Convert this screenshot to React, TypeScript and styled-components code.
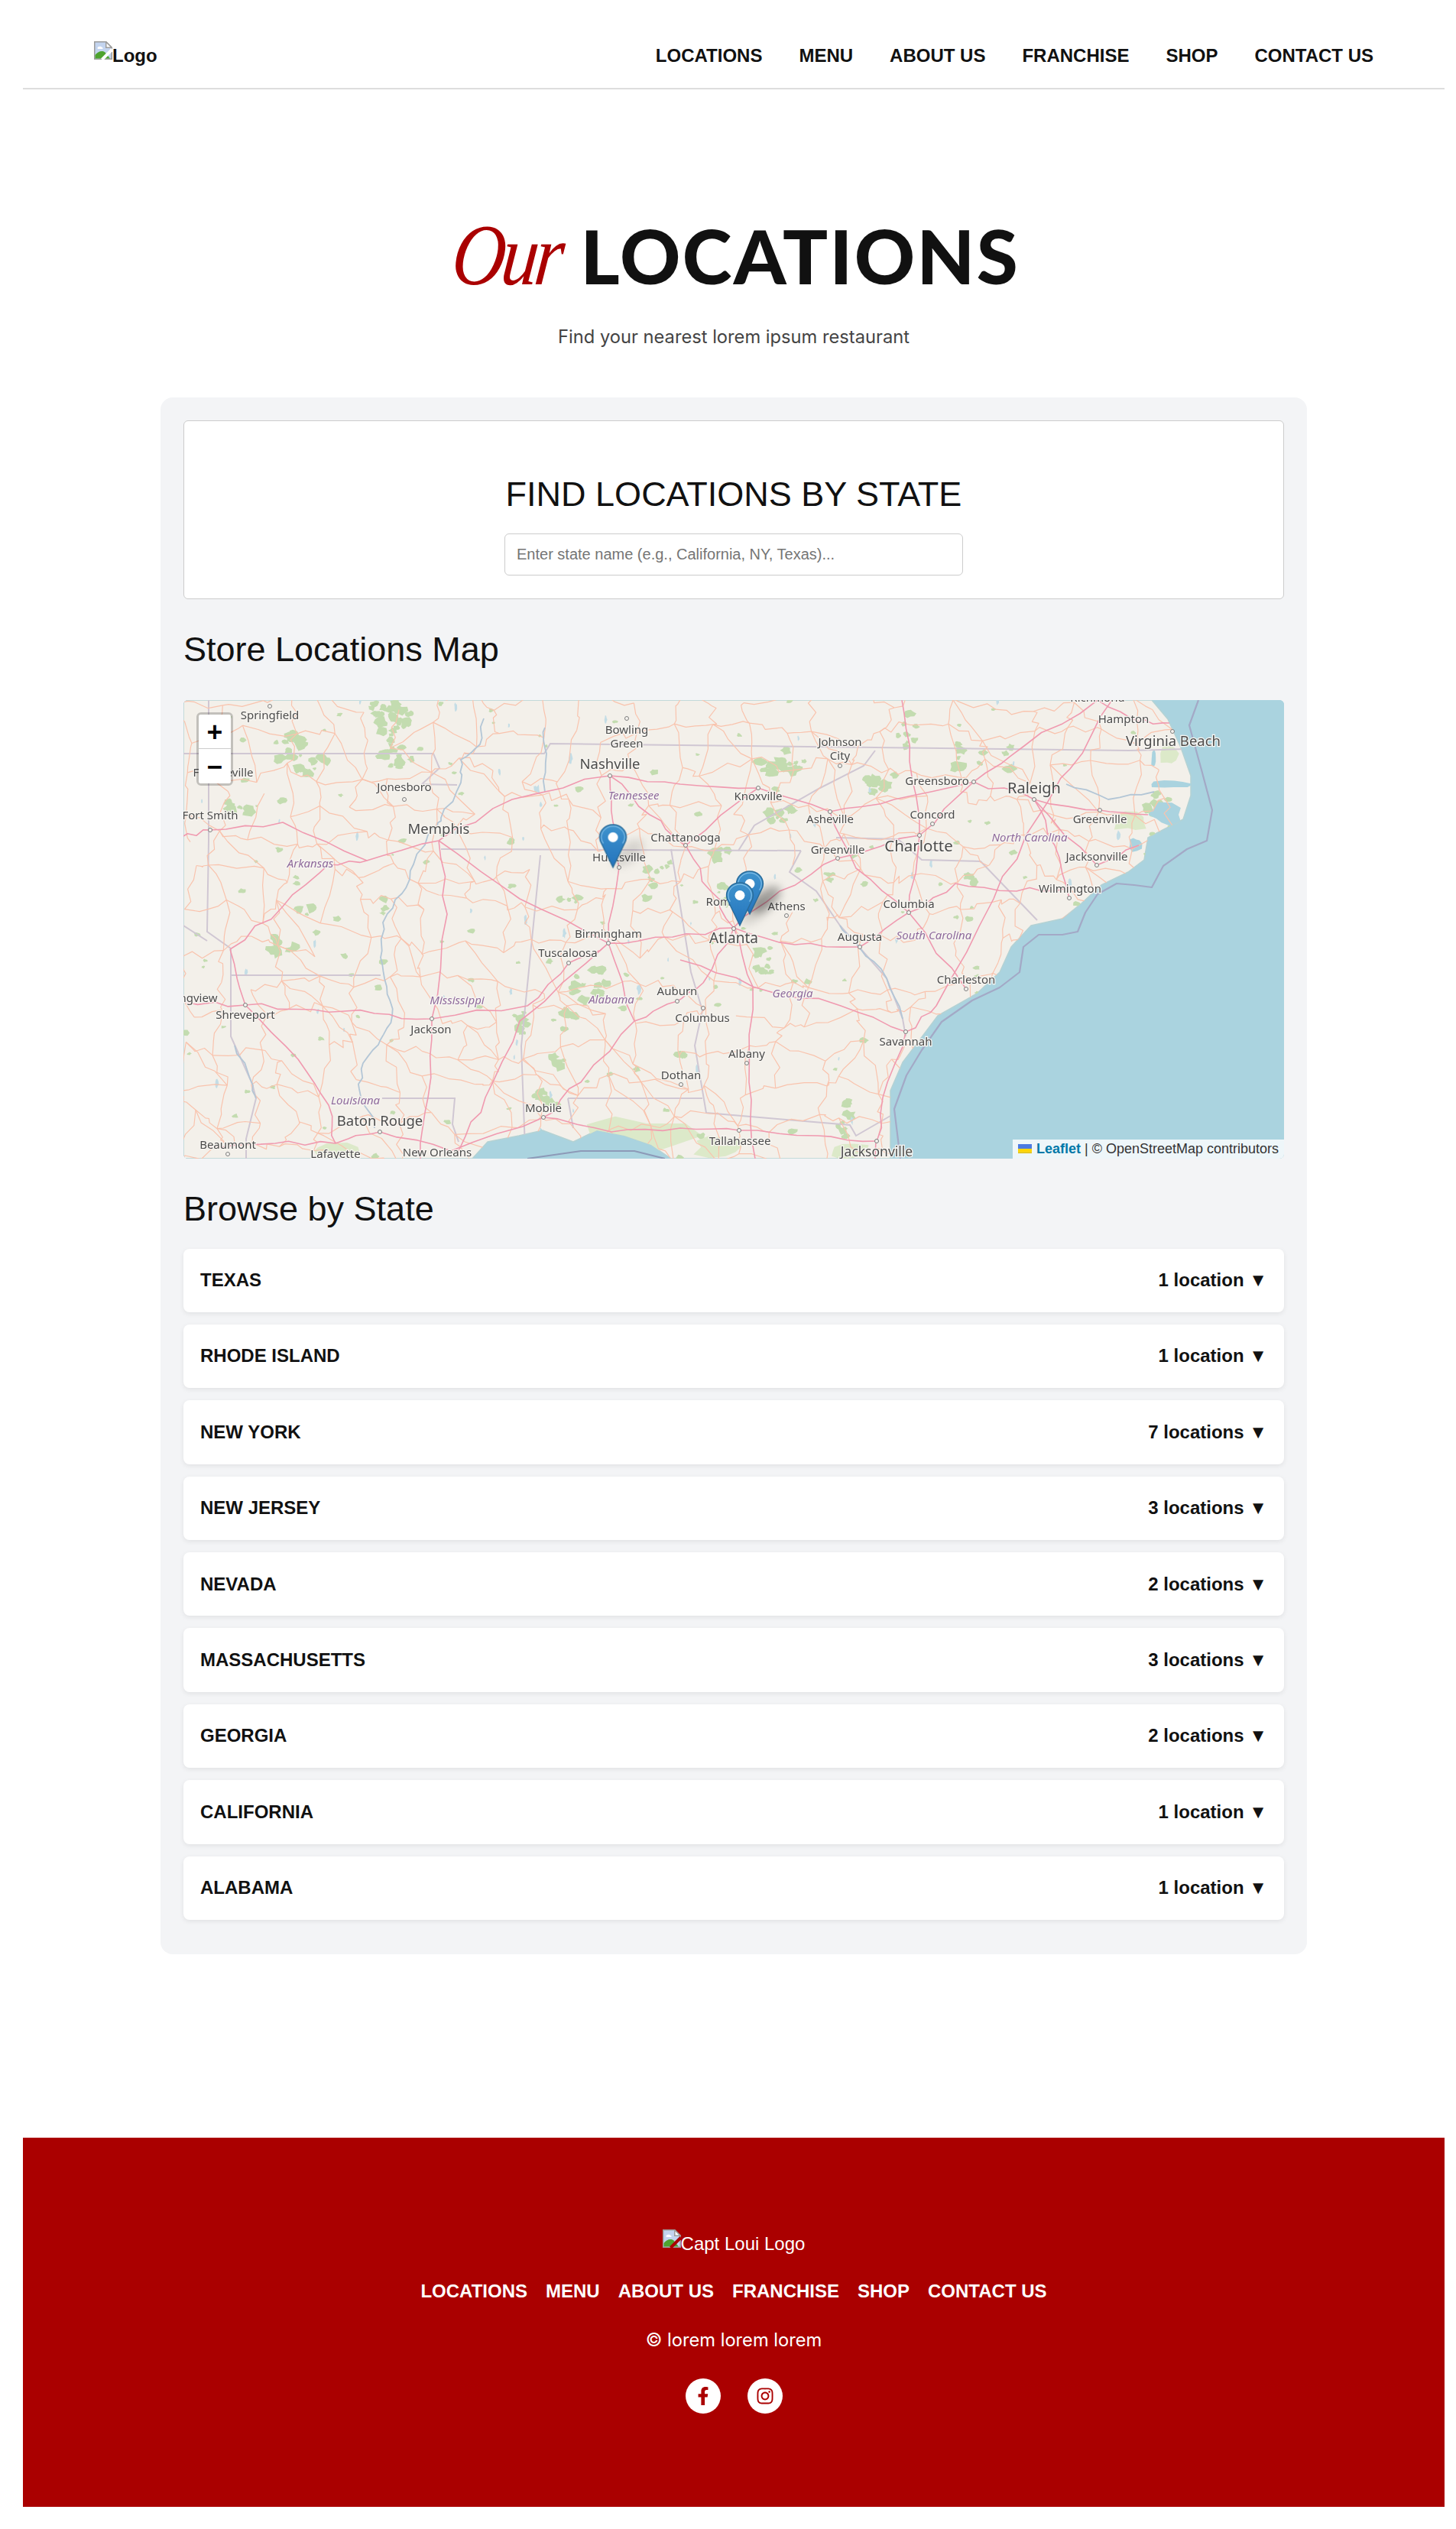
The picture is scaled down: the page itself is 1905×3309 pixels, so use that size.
import styled, { createGlobalStyle } from "styled-components"
import { FaFacebookF, FaInstagram } from "react-icons/fa"

const GlobalStyle = createGlobalStyle`
	* {
		box-sizing: border-box;
	}
	body {
		margin: 0;
		background: #fff;
		color: #111;
		font-family: "Liberation Sans", Arial, sans-serif;
		font-size: 24px;
		line-height: 1.6;
	}
`

const Page = styled.div`
	padding: 0 15px 29px 30px;
`

const Header = styled.header`
	display: flex;
	justify-content: space-between;
	align-items: flex-start;
	padding: 54px 93px 23px;
	border-bottom: 2px solid #ddd;
`

const LogoWrap = styled.div<{ $bold?: boolean }>`
	display: flex;
	align-items: flex-start;
	font-weight: ${(p) => (p.$bold ? 700 : 400)};
`

const NavList = styled.nav<{ $gap: number }>`
	display: flex;
	gap: ${(p) => p.$gap}px;
	font-weight: 700;
`

const NavLink = styled.a`
	color: inherit;
	text-decoration: none;
	cursor: pointer;
`

const Hero = styled.section`
	padding-top: 167px;
	text-align: center;
`

const Title = styled.h1`
	display: flex;
	justify-content: center;
	align-items: baseline;
	gap: 14px;
	margin: 0;
	height: 100px;
	line-height: 100px;
	padding-right: 6px;
`

const TitleScript = styled.span`
	display: inline-block;
	font-family: "Liberation Serif", serif;
	font-style: italic;
	font-weight: 400;
	font-size: 114px;
	color: #a00;
	letter-spacing: -6px;
	transform: skewX(-6deg) scaleX(0.85);
`

const TitleMain = styled.span`
	font-family: Lato, sans-serif;
	font-weight: 900;
	font-size: 98px;
	letter-spacing: 2.400px;
	color: #111;
`

const Subtitle = styled.p`
	margin: 38px 0 0;
	font-family: Inter, sans-serif;
	font-size: 23.700px;
	line-height: 38px;
	color: #444;
`

const Panel = styled.main`
	width: 1500px;
	margin: 60px auto 240px;
	padding: 30px 30px 45px;
	background: #f3f4f6;
	border-radius: 16px;
`

const SearchCard = styled.div`
	display: flex;
	flex-direction: column;
	align-items: center;
	padding: 60px 30px 30px;
	background: #fff;
	border: 1px solid #ccc;
	border-radius: 6px;
`

const Heading = styled.h2<{ $top?: number; $bottom?: number }>`
	margin: ${(p) => p.$top ?? 0}px 0 ${(p) => p.$bottom ?? 0}px;
	font-size: 45px;
	font-weight: 400;
	line-height: 71.700px;
`

const SearchInput = styled.input`
	width: 600px;
	height: 55px;
	padding: 0 15px;
	border: 1px solid #ccc;
	border-radius: 6px;
	font-family: inherit;
	font-size: 20px;
	color: #111;
	&::placeholder {
		color: #757575;
	}
`

const MapBox = styled.div`
	position: relative;
	width: 1440px;
	height: 600px;
	overflow: hidden;
	border-radius: 6px;
	background: #aad3df;
	& > svg {
		display: block;
	}
`

const ZoomControl = styled.div`
	position: absolute;
	top: 16px;
	left: 17px;
	width: 48px;
	border: 3px solid rgba(0, 0, 0, 0.2);
	border-radius: 6px;
	background-clip: padding-box;
`

const ZoomButton = styled.a<{ $last?: boolean }>`
	display: block;
	height: 45px;
	background: #fff;
	border-bottom: ${(p) => (p.$last ? "none" : "1px solid #ccc")};
	border-radius: ${(p) => (p.$last ? "0 0 3px 3px" : "3px 3px 0 0")};
	color: #000;
	font-family: "DejaVu Sans Mono", monospace;
	font-size: 33px;
	font-weight: 700;
	line-height: 45px;
	text-align: center;
`

const Attribution = styled.div`
	position: absolute;
	right: 0;
	bottom: 0;
	display: flex;
	align-items: center;
	width: 355px;
	height: 25px;
	padding-left: 7px;
	background: rgba(255, 255, 255, 0.8);
	color: #333;
	font-size: 18px;
	line-height: 25px;
	white-space: pre;
`

const LeafletLink = styled.a`
	margin-left: 6px;
	color: #0078a8;
	font-weight: 700;
`

const StateList = styled.div`
	display: flex;
	flex-direction: column;
	gap: 16px;
`

const StateRow = styled.div`
	display: flex;
	justify-content: space-between;
	padding: 22.500px 22px 22.500px 22px;
	background: #fff;
	border-radius: 8px;
	box-shadow: 0 2px 6px rgba(0, 0, 0, 0.08);
	font-weight: 700;
	cursor: pointer;
`

const Footer = styled.footer`
	display: flex;
	flex-direction: column;
	align-items: center;
	padding: 120px 0 122px;
	background: #a00;
	color: #fff;
`

const FooterNav = styled(NavList)`
	margin-top: 24px;
`

const Copyright = styled.p`
	margin: 25px 0 0;
	font-family: Inter, sans-serif;
	font-size: 23.700px;
	line-height: 38px;
`

const Socials = styled.div`
	display: flex;
	gap: 35px;
	margin-top: 31px;
`

const SocialIcon = styled.a`
	display: flex;
	align-items: center;
	justify-content: center;
	width: 46px;
	height: 46px;
	border-radius: 50%;
	background: #fff;
	color: #a00;
	font-size: 24px;
`

const NAV = ["LOCATIONS", "MENU", "ABOUT US", "FRANCHISE", "SHOP", "CONTACT US"]

const STATES = [
	["TEXAS", "1 location"],
	["RHODE ISLAND", "1 location"],
	["NEW YORK", "7 locations"],
	["NEW JERSEY", "3 locations"],
	["NEVADA", "2 locations"],
	["MASSACHUSETTS", "3 locations"],
	["GEORGIA", "2 locations"],
	["CALIFORNIA", "1 location"],
	["ALABAMA", "1 location"]
]

type Pt = [number, number]

const LAND: Pt[] = [
	[0, 0], [1267, 0], [1288, 25], [1305, 62], [1318, 99], [1318, 125], [1308, 156], [1262, 180],
	[1257, 209], [1236, 225], [1201, 242], [1175, 266], [1150, 286], [1109, 295], [1083, 323], [1068, 356],
	[1038, 384], [987, 413], [966, 441], [941, 474], [925, 511], [925, 600], [638, 600], [612, 582],
	[577, 570], [541, 563], [510, 578], [470, 563], [439, 570], [398, 578], [378, 600], [0, 600]
]

const SEA_LINE: Pt[] = [
	[1328, 0], [1316, 33], [1333, 95], [1346, 144], [1339, 184], [1313, 195], [1282, 217], [1267, 245],
	[1244, 242], [1221, 240], [1196, 254], [1180, 278], [1170, 303], [1150, 307], [1119, 307], [1099, 323],
	[1094, 356], [1068, 376], [1032, 393], [992, 421], [966, 458], [946, 491], [930, 535], [938, 600]
]

const GULF_LINE: Pt[] = [[450, 600], [520, 590], [590, 590], [630, 600]]

// sounds and bays that cut into the coast
const INLETS: number[][] = [
	[1290, 110, 30, 7], [1285, 150, 26, 16], [1296, 18, 8, 20], [1245, 188, 10, 10], [470, 585, 8, 24], [1270, 75, 4, 14]
]

const BORDERS: Pt[][] = [
	[[0, 70], [327, 70], [335, 89], [312, 110], [358, 111]],
	[[368, 70], [472, 70], [480, 57], [905, 62], [1237, 66], [1313, 64]],
	[[337, 195], [808, 197]],
	[[905, 66], [890, 86], [833, 115], [747, 164], [726, 197]],
	[[854, 180], [935, 182], [966, 209], [1043, 211], [1117, 288]],
	[[808, 197], [793, 225], [828, 250], [859, 295], [884, 323], [920, 364], [941, 417], [945, 440]],
	[[638, 195], [664, 356], [679, 406], [669, 452], [684, 540], [872, 556], [880, 570], [925, 544]],
	[[467, 203], [442, 453], [447, 586]],
	[[503, 521], [679, 521]],
	[[503, 521], [510, 560]],
	[[260, 521], [355, 521], [352, 555], [360, 578]],
	[[62, 360], [258, 360]],
	[[62, 325], [62, 440], [90, 502], [95, 521], [82, 574], [82, 600]],
	[[33, 0], [33, 184], [31, 303], [62, 325]],
	[[0, 295], [31, 315]]
]

const RIVERS: Pt[][] = [
	[[393, 24], [388, 58], [363, 78], [363, 108], [337, 154], [327, 166], [301, 215], [286, 253], [261, 291], [258, 337], [266, 375], [273, 414], [258, 444], [235, 475], [230, 509], [250, 560]],
	[[473, 36], [475, 70], [473, 120]],
	[[67, 452], [90, 502], [95, 521]],
	[[859, 295], [884, 323], [920, 364], [941, 417]],
	[[1155, 110], [1210, 130], [1270, 120]]
]

const INTERSTATES: Pt[][] = [
	[[0, 178], [35, 170], [130, 160], [240, 210], [334, 184], [430, 130], [558, 99], [650, 110], [752, 115], [846, 146], [930, 130], [1034, 107], [1113, 130], [1140, 190], [1159, 259]],
	[[558, 99], [562, 160], [570, 219], [556, 318], [590, 420], [520, 500], [471, 546]],
	[[0, 395], [81, 399], [170, 405], [250, 410], [325, 417], [450, 400], [504, 344], [556, 318], [640, 310], [720, 298], [800, 320], [885, 323], [949, 278], [1010, 240], [1090, 250], [1160, 245]],
	[[590, 420], [646, 394], [680, 370], [720, 298], [780, 250], [856, 207], [963, 177], [1034, 107], [1100, 60], [1196, 0]],
	[[657, 190], [690, 250], [720, 298], [745, 375], [740, 500], [748, 600]],
	[[1215, 0], [1160, 90], [1120, 150], [1060, 260], [985, 400], [945, 434], [915, 520], [905, 600]],
	[[30, 585], [120, 580], [199, 580], [257, 565], [350, 590], [471, 546], [560, 565], [650, 560], [727, 563], [830, 570], [907, 577]],
	[[334, 184], [345, 280], [325, 417], [320, 520], [310, 600]],
	[[556, 318], [440, 420], [395, 520], [360, 590]],
	[[558, 99], [610, 150], [657, 190], [752, 115]],
	[[846, 146], [880, 220], [949, 278], [1024, 378]],
	[[963, 177], [949, 278]],
	[[940, 0], [950, 80], [963, 177]],
	[[334, 184], [440, 260], [556, 318]],
	[[61, 326], [130, 270], [190, 215], [240, 210]],
	[[61, 326], [81, 399], [150, 470], [190, 530], [199, 580]],
	[[1196, 0], [1250, 28], [1290, 30]],
	[[945, 434], [860, 400], [745, 375], [650, 340]],
	[[1113, 130], [1195, 216], [1250, 190]],
	[[1113, 130], [1199, 144], [1262, 150]]
]

const FORESTS: number[][] = [
	[270, 22, 28, 24], [280, 70, 22, 20], [138, 60, 20, 22], [165, 84, 22, 14], [72, 142, 18, 15],
	[160, 276, 12, 8], [130, 320, 16, 18], [260, 268, 6, 14], [505, 262, 14, 10],
	[530, 372, 26, 24], [505, 420, 10, 18], [490, 470, 8, 10], [471, 520, 20, 12], [440, 425, 12, 20],
	[780, 80, 38, 15], [905, 112, 22, 16], [778, 148, 28, 10], [708, 248, 6, 16], [760, 340, 12, 24],
	[705, 200, 10, 14], [1080, 72, 6, 18], [1015, 60, 8, 30], [1030, 234, 10, 6], [866, 545, 12, 26],
	[945, 40, 14, 24], [620, 215, 18, 10], [610, 250, 6, 18], [650, 470, 6, 8], [1270, 140, 14, 18]
]

const PALE_GREEN: number[][] = [
	[590, 570, 80, 26], [700, 585, 40, 16], [870, 590, 30, 12], [200, 590, 40, 10], [1290, 70, 14, 20], [1240, 160, 24, 14]
]

const LABELS: [string, number, number, number?, boolean?][] = [
	["Springfield", 113, 21],
	["Bowling", 580, 40],
	["Green", 580, 58],
	["Nashville", 558, 85, 18.500],
	["Tennessee", 589, 126, 15, true],
	["Jonesboro", 289, 115],
	["Fort Smith", 35, 152],
	["Fayetteville", 52, 96],
	["Memphis", 334, 170, 18.500],
	["Knoxville", 752, 127],
	["Johnson", 859, 56],
	["City", 859, 74],
	["Greensboro", 986, 107],
	["Raleigh", 1113, 117, 20],
	["Concord", 980, 151],
	["Asheville", 846, 157],
	["Greenville", 856, 197],
	["Charlotte", 962, 192, 20.500],
	["Greenville", 1199, 157],
	["North Carolina", 1107, 181, 15, true],
	["Jacksonville", 1195, 206],
	["Wilmington", 1160, 248],
	["Columbia", 949, 268],
	["Athens", 789, 271],
	["Atlanta", 720, 313, 19],
	["Augusta", 885, 311],
	["South Carolina", 982, 309, 15, true],
	["Charleston", 1024, 367],
	["Georgia", 797, 385, 15, true],
	["Columbus", 679, 417],
	["Savannah", 945, 448],
	["Albany", 737, 464],
	["Dothan", 651, 492],
	["Tallahassee", 728, 578],
	["Jacksonville", 907, 592, 17.500],
	["Hampton", 1230, 26],
	["Virginia Beach", 1295, 55, 18.500],
	["Richmond", 1196, -2],
	["Chattanooga", 657, 181],
	["Huntsville", 570, 207],
	["Rome", 704, 265],
	["Birmingham", 556, 307],
	["Tuscaloosa", 503, 332],
	["Auburn", 646, 382],
	["Alabama", 560, 393, 15, true],
	["Mississippi", 358, 394, 15, true],
	["Arkansas", 166, 215, 15, true],
	["Jackson", 324, 432],
	["Longview", 11, 391],
	["Shreveport", 81, 413],
	["Louisiana", 225, 525, 15, true],
	["Baton Rouge", 257, 552, 18.500],
	["Mobile", 471, 535],
	["Beaumont", 58, 583],
	["Lafayette", 199, 595],
	["New Orleans", 332, 593]
]

const DOTS: Pt[] = [
	[113, 8], [580, 24], [558, 99], [289, 130], [35, 170], [752, 115], [859, 86], [1034, 107], [1113, 130],
	[980, 162], [846, 146], [856, 207], [963, 177], [1199, 144], [1195, 216], [1159, 259], [949, 278],
	[789, 282], [720, 299], [885, 323], [1024, 378], [680, 403], [945, 434], [737, 475], [651, 503],
	[727, 563], [907, 577], [1294, 41], [657, 190], [570, 219], [556, 318], [504, 344], [646, 394],
	[325, 417], [81, 399], [257, 565], [471, 546], [58, 594]
]

function toPath(points: Pt[]) {
	return points.map((p, i) => `${i ? "L" : "M"}${p[0].toFixed(1)} ${p[1].toFixed(1)}`).join(" ")
}

// small seeded generator so the minor roads and forest edges stay the same on every load
function makeRandom(seed: number) {
	let s = seed
	return () => {
		s = (s * 16807) % 2147483647
		return (s - 1) / 2147483646
	}
}

function wiggle(points: Pt[], amount: number, random: () => number) {
	const out: Pt[] = []
	points.forEach((p, i) => {
		out.push(p)
		const next = points[i + 1]
		if (!next) return
		for (const t of [0.25, 0.5, 0.75]) {
			out.push([
				p[0] + (next[0] - p[0]) * t + (random() - 0.5) * amount,
				p[1] + (next[1] - p[1]) * t + (random() - 0.5) * amount
			])
		}
	})
	return out
}

function minorRoads() {
	const random = makeRandom(4711)
	const cols = 30
	const rows = 14
	const nodes: Pt[][] = []
	for (let r = 0; r < rows; r++) {
		nodes[r] = []
		for (let c = 0; c < cols; c++) {
			nodes[r][c] = [c * 46 + (random() - 0.5) * 34, r * 46 + (random() - 0.5) * 34]
		}
	}
	const roads: string[] = []
	for (let r = 0; r < rows; r++) {
		for (let c = 0; c < cols; c++) {
			if (c < cols - 1 && random() > 0.22) roads.push(toPath(wiggle([nodes[r][c], nodes[r][c + 1]], 12, random)))
			if (r < rows - 1 && random() > 0.18) roads.push(toPath(wiggle([nodes[r][c], nodes[r + 1][c]], 12, random)))
			if (r < rows - 1 && c < cols - 1 && random() > 0.8) roads.push(toPath(wiggle([nodes[r][c], nodes[r + 1][c + 1]], 12, random)))
		}
	}
	return roads
}

function blob(cx: number, cy: number, rx: number, ry: number, random: () => number) {
	const pts: Pt[] = []
	const n = 10
	for (let i = 0; i < n; i++) {
		const a = (i / n) * Math.PI * 2
		const k = 0.55 + random() * 0.6
		pts.push([cx + Math.cos(a) * rx * k, cy + Math.sin(a) * ry * k])
	}
	return toPath(pts) + " Z"
}

// a forest is a cluster of small patches, not one big shape
function forestPatches(random: () => number) {
	const out: string[] = []
	FORESTS.forEach(([cx, cy, rx, ry]) => {
		const count = Math.max(4, Math.round((rx * ry) / 35))
		for (let i = 0; i < count; i++) {
			const a = random() * Math.PI * 2
			const d = Math.sqrt(random())
			const size = 2 + random() * 6
			out.push(blob(cx + Math.cos(a) * rx * d, cy + Math.sin(a) * ry * d, size * 1.300, size, random))
		}
	})
	for (let i = 0; i < 170; i++) {
		const size = 1.500 + random() * 3
		out.push(blob(random() * 1300, random() * 600, size * 1.500, size, random))
	}
	return out
}

function lakes(random: () => number) {
	const out: string[] = []
	for (let i = 0; i < 60; i++) {
		const size = 1 + random() * 2
		out.push(blob(random() * 1280, random() * 560, size, size * 2.500, random))
	}
	return out
}

const MINOR = minorRoads()
const blobRandom = makeRandom(99)
const FOREST_PATHS = forestPatches(blobRandom)
const LAKE_PATHS = lakes(blobRandom)
const PALE_PATHS = PALE_GREEN.map((f) => blob(f[0], f[1], f[2], f[3], blobRandom))
const INLET_PATHS = INLETS.map((f) => blob(f[0], f[1], f[2], f[3], blobRandom))
const roadRandom = makeRandom(1234)
const INTERSTATE_PATHS = INTERSTATES.map((r) => toPath(wiggle(r, 7, roadRandom)))

function BrokenImage({ tear }: { tear: string }) {
	return (
		<svg width="24" height="24" viewBox="0 0 16 16">
			<path d="M.5.5h10l5 5v10H.5z" fill="#c3d4ef" stroke="#9c9c9c" />
			<path d="M10.5.5v5h5z" fill="#fff" stroke="#9c9c9c" />
			<path d="M3 6c0-1.5 3-2 4-.6 1 .2 1 1.1.4 1.2H3.5C3 6.600 3 6.300 3 6z" fill="#fff" />
			<path d="M1 15v-3c2-3 6-4.500 8.500-2.500L14 15z" fill="#4ea32f" />
			<path d="M7 16 16 7" stroke={tear} strokeWidth="2.600" />
		</svg>
	)
}

function Pin({ x, y }: { x: number; y: number }) {
	return (
		<g transform={`translate(${x - 18.500} ${y - 57}) scale(1.480 1.400)`}>
			<path
				d="M12.500.7C5.900.7.700 5.900.700 12.500c0 2.400.800 4.600 2 6.600L12.500 40.500l9.800-21.400c1.200-2 2-4.200 2-6.600C24.300 5.900 19.100.7 12.500.7z"
				fill="url(#pinFill)"
				stroke="#2a6c9a"
				strokeWidth="1"
			/>
			<path d="M4 18.300C2.800 16.500 2.200 14.600 2.200 12.500 2.200 6.800 6.800 2.200 12.500 2.200s10.300 4.600 10.300 10.300c0 2.100-.6 4-1.800 5.800" fill="none" stroke="#7fbde6" strokeWidth=".8" />
			<ellipse cx="12.500" cy="12.500" rx="4.400" ry="4.600" fill="#fff" />
		</g>
	)
}

function PinShadow({ x, y, opacity }: { x: number; y: number; opacity: number }) {
	return <ellipse cx={x + 20} cy={y - 19} rx="24" ry="12" transform={`rotate(-38 ${x + 20} ${y - 19})`} fill="#000" opacity={opacity} />
}

function StoreMap() {
	return (
		<svg width="1440" height="600" viewBox="0 0 1440 600" aria-label="Store locations map">
			<defs>
				<clipPath id="landClip">
					<path d={toPath(LAND) + " Z"} />
				</clipPath>
				<linearGradient id="pinFill" x1="0" y1="0" x2="0" y2="1">
					<stop offset="0" stopColor="#3f93cd" />
					<stop offset="1" stopColor="#2474bd" />
				</linearGradient>
				<filter id="soft" x="-5%" y="-5%" width="110%" height="110%">
					<feGaussianBlur stdDeviation=".55" />
				</filter>
				<filter id="shadowBlur" x="-50%" y="-50%" width="200%" height="200%">
					<feGaussianBlur stdDeviation="6" />
				</filter>
			</defs>
			<rect width="1440" height="600" fill="#aad3df" />
			<g filter="url(#soft)">
				<path d={toPath(SEA_LINE)} fill="none" stroke="#a3a9c6" strokeWidth="2.200" strokeLinejoin="round" />
				<path d={toPath(GULF_LINE)} fill="none" stroke="#8d9ab8" strokeWidth="2.200" />
				<path d={toPath(LAND) + " Z"} fill="#f3f0ea" stroke="#b4d2d4" strokeWidth="1.500" strokeLinejoin="round" />
				<g clipPath="url(#landClip)">
					{PALE_PATHS.map((d, i) => (
						<path key={i} d={d} fill="#dce9c9" />
					))}
					{FOREST_PATHS.map((d, i) => (
						<path key={i} d={d} fill="#c3dcb0" />
					))}
					{LAKE_PATHS.map((d, i) => (
						<path key={i} d={d} fill="#c4dde6" />
					))}
					{INLET_PATHS.map((d, i) => (
						<path key={i} d={d} fill="#aad3df" />
					))}
					{BORDERS.map((b, i) => (
						<path key={i} d={toPath(b)} fill="none" stroke="#d0c7d3" strokeWidth="2" />
					))}
					{MINOR.map((d, i) => (
						<path key={i} d={d} fill="none" stroke="#f9c3ad" strokeWidth="1.200" strokeLinejoin="round" />
					))}
					{RIVERS.map((r, i) => (
						<path key={i} d={toPath(wiggle(r, 6, makeRandom(i + 7)))} fill="none" stroke="#b3c6d6" strokeWidth="1.800" strokeLinejoin="round" />
					))}
					{INTERSTATE_PATHS.map((d, i) => (
						<path key={i} d={d} fill="none" stroke="#f09ab0" strokeWidth="1.600" strokeLinejoin="round" />
					))}
				</g>
				{DOTS.map((d, i) => (
					<circle key={i} cx={d[0]} cy={d[1]} r="2.500" fill="#f6f4f0" stroke="#7d7d7d" strokeWidth="1" />
				))}
				<g fontFamily="'Noto Sans', sans-serif" textAnchor="middle" dominantBaseline="middle">
					{LABELS.map(([name, x, y, size, italic], i) => (
						<text
							key={i}
							x={x}
							y={y}
							fontSize={size ?? 15}
							fontStyle={italic ? "italic" : "normal"}
							fill={italic ? "#8f6b9c" : "#4c4c4c"}
							stroke="#f7f5f1"
							strokeWidth="2.500"
							paintOrder="stroke"
						>
							{name}
						</text>
					))}
				</g>
			</g>
			<g filter="url(#shadowBlur)">
				<PinShadow x={562} y={219} opacity={0.12} />
				<PinShadow x={741} y={280} opacity={0.32} />
				<PinShadow x={728} y={295} opacity={0.12} />
			</g>
			<Pin x={562} y={219} />
			<Pin x={741} y={280} />
			<Pin x={728} y={295} />
		</svg>
	)
}

export default function App() {
	return (
		<Page>
			<GlobalStyle />
			<Header>
				<LogoWrap $bold>
					<BrokenImage tear="#fff" />
					Logo
				</LogoWrap>
				<NavList $gap={48}>
					{NAV.map((item) => (
						<NavLink key={item}>{item}</NavLink>
					))}
				</NavList>
			</Header>
			<Hero>
				<Title>
					<TitleScript>Our</TitleScript>
					<TitleMain>LOCATIONS</TitleMain>
				</Title>
				<Subtitle>Find your nearest lorem ipsum restaurant</Subtitle>
			</Hero>
			<Panel>
				<SearchCard>
					<Heading $bottom={15}>FIND LOCATIONS BY STATE</Heading>
					<SearchInput placeholder="Enter state name (e.g., California, NY, Texas)..." />
				</SearchCard>
				<Heading $top={30} $bottom={30}>
					Store Locations Map
				</Heading>
				<MapBox>
					<StoreMap />
					<ZoomControl>
						<ZoomButton>+</ZoomButton>
						<ZoomButton $last>−</ZoomButton>
					</ZoomControl>
					<Attribution>
						<svg width="18" height="12" viewBox="0 0 12 8">
							<path fill="#4c7be1" d="M0 0h12v4H0z" />
							<path fill="#ffd500" d="M0 4h12v3H0z" />
							<path fill="#e0bc00" d="M0 7h12v1H0z" />
						</svg>
						<LeafletLink>Leaflet</LeafletLink> | © OpenStreetMap contributors
					</Attribution>
				</MapBox>
				<Heading $top={30} $bottom={16}>
					Browse by State
				</Heading>
				<StateList>
					{STATES.map(([name, count]) => (
						<StateRow key={name}>
							<span>{name}</span>
							<span>{count} ▼</span>
						</StateRow>
					))}
				</StateList>
			</Panel>
			<Footer>
				<LogoWrap>
					<BrokenImage tear="#a00" />
					Capt Loui Logo
				</LogoWrap>
				<FooterNav $gap={24}>
					{NAV.map((item) => (
						<NavLink key={item}>{item}</NavLink>
					))}
				</FooterNav>
				<Copyright>© lorem lorem lorem</Copyright>
				<Socials>
					<SocialIcon>
						<FaFacebookF />
					</SocialIcon>
					<SocialIcon>
						<FaInstagram />
					</SocialIcon>
				</Socials>
			</Footer>
		</Page>
	)
}
